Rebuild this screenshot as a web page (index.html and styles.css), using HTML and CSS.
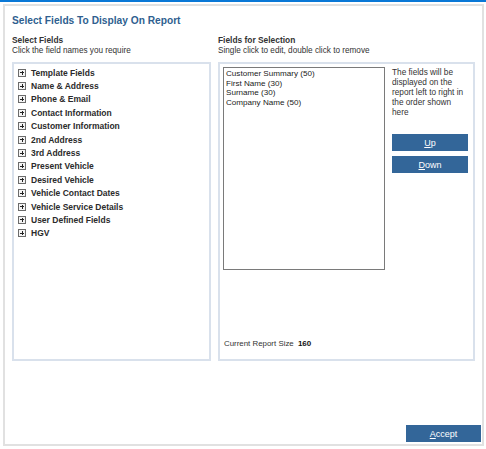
FILE: index.html
```html
<!DOCTYPE html>
<html>
<head>
<meta charset="utf-8">
<link rel="stylesheet" href="styles.css">
</head>
<body>
<div class="topbar"></div>
<div class="panel">
  <h1 class="title">Select Fields To Display On Report</h1>
  <div class="columns">
    <div class="col col-left">
      <div class="label">Select Fields</div>
      <div class="hint">Click the field names you require</div>
      <div class="box tree">
        <div class="node"><span class="plus"></span>Template Fields</div>
        <div class="node"><span class="plus"></span>Name &amp; Address</div>
        <div class="node"><span class="plus"></span>Phone &amp; Email</div>
        <div class="node"><span class="plus"></span>Contact Information</div>
        <div class="node"><span class="plus"></span>Customer Information</div>
        <div class="node"><span class="plus"></span>2nd Address</div>
        <div class="node"><span class="plus"></span>3rd Address</div>
        <div class="node"><span class="plus"></span>Present Vehicle</div>
        <div class="node"><span class="plus"></span>Desired Vehicle</div>
        <div class="node"><span class="plus"></span>Vehicle Contact Dates</div>
        <div class="node"><span class="plus"></span>Vehicle Service Details</div>
        <div class="node"><span class="plus"></span>User Defined Fields</div>
        <div class="node"><span class="plus"></span>HGV</div>
      </div>
    </div>
    <div class="col col-right">
      <div class="label">Fields for Selection</div>
      <div class="hint">Single click to edit, double click to remove</div>
      <div class="box selbox">
        <div class="selrow">
          <div class="listbox">
            <div class="opt">Customer Summary (50)</div>
            <div class="opt">First Name (30)</div>
            <div class="opt">Surname (30)</div>
            <div class="opt">Company Name (50)</div>
          </div>
          <div class="side">
            <p class="note">The fields will be displayed on the report left to right in the order shown here</p>
            <button class="btn btn-side"><u>U</u>p</button>
            <button class="btn btn-side"><u>D</u>own</button>
          </div>
        </div>
        <div class="size">Current Report Size <b>160</b></div>
      </div>
    </div>
  </div>
  <div class="footer">
    <button class="btn btn-accept"><u>A</u>ccept</button>
  </div>
</div>
</body>
</html>
```
FILE: styles.css
```css
html, body {
  margin: 0;
  padding: 0;
  background: #ffffff;
  font-family: "Liberation Sans", Arial, sans-serif;
  color: #333333;
}
.topbar {
  height: 2px;
  background: #0a78d6;
}
.panel {
  margin: 2px 2px 0 3px;
  height: 442px;
  box-sizing: border-box;
  border: 2px solid #e1e1e1;
  padding: 0 1px 0 7px;
  display: flex;
  flex-direction: column;
}
.title {
  margin: 0;
  padding-top: 8px;
  height: 24px;
  box-sizing: border-box;
  font-size: 10.2px;
  font-weight: bold;
  color: #2f5f90;
  line-height: 14px;
}
.columns {
  display: flex;
  gap: 7px;
  margin-top: 6px;
}
.label {
  font-size: 8.4px;
  font-weight: bold;
  line-height: 9px;
  color: #333;
}
.hint {
  font-size: 8.2px;
  line-height: 11px;
  color: #333;
  margin-bottom: 6px;
}
.box {
  border: 2px solid #d9e1ec;
  box-sizing: border-box;
  height: 299px;
}
.col-left { width: 199px; }
.col-right { width: 257px; }
.tree {
  padding: 2px 0 0 4px;
}
.node {
  display: flex;
  align-items: center;
  height: 13.4px;
  font-size: 8.5px;
  font-weight: bold;
  color: #2b2b2b;
}
.plus {
  width: 6px;
  height: 6px;
  border: 1px solid #6b6b6b;
  background: #f4f4f4;
  margin-right: 5px;
  position: relative;
  flex: none;
}
.plus::before {
  content: "";
  position: absolute;
  left: 1px; top: 2.5px;
  width: 4px; height: 1px;
  background: #222;
}
.plus::after {
  content: "";
  position: absolute;
  left: 2.5px; top: 1px;
  width: 1px; height: 4px;
  background: #222;
}
.selbox {
  padding: 3px 0 0 3px;
  display: flex;
  flex-direction: column;
}
.selrow {
  display: flex;
  gap: 6px;
}
.listbox {
  width: 162px;
  height: 203px;
  box-sizing: border-box;
  border: 1px solid #7a7a7a;
  padding: 1px 2px;
  font-size: 8.1px;
  line-height: 9.5px;
  color: #222;
}
.side {
  width: 77px;
  display: flex;
  flex-direction: column;
}
.note {
  margin: 1px 0 16px 1px;
  font-size: 8.25px;
  line-height: 10px;
  color: #333;
}
.btn {
  display: block;
  border: none;
  background: #336699;
  color: #ffffff;
  font-family: "Liberation Sans", Arial, sans-serif;
  font-size: 9px;
  padding: 0;
  cursor: pointer;
}
.btn-side {
  width: 76px;
  height: 17px;
  margin: 0 0 5px 1px;
}
.size {
  margin-top: auto;
  margin-bottom: 11px;
  padding-left: 1px;
  font-size: 7.9px;
  color: #333;
}
.size b {
  font-size: 8px;
  color: #111;
  margin-left: 2px;
}
.footer {
  margin-top: auto;
  display: flex;
  justify-content: flex-end;
  padding-bottom: 2px;
}
.btn-accept {
  width: 75px;
  height: 17px;
}
```
